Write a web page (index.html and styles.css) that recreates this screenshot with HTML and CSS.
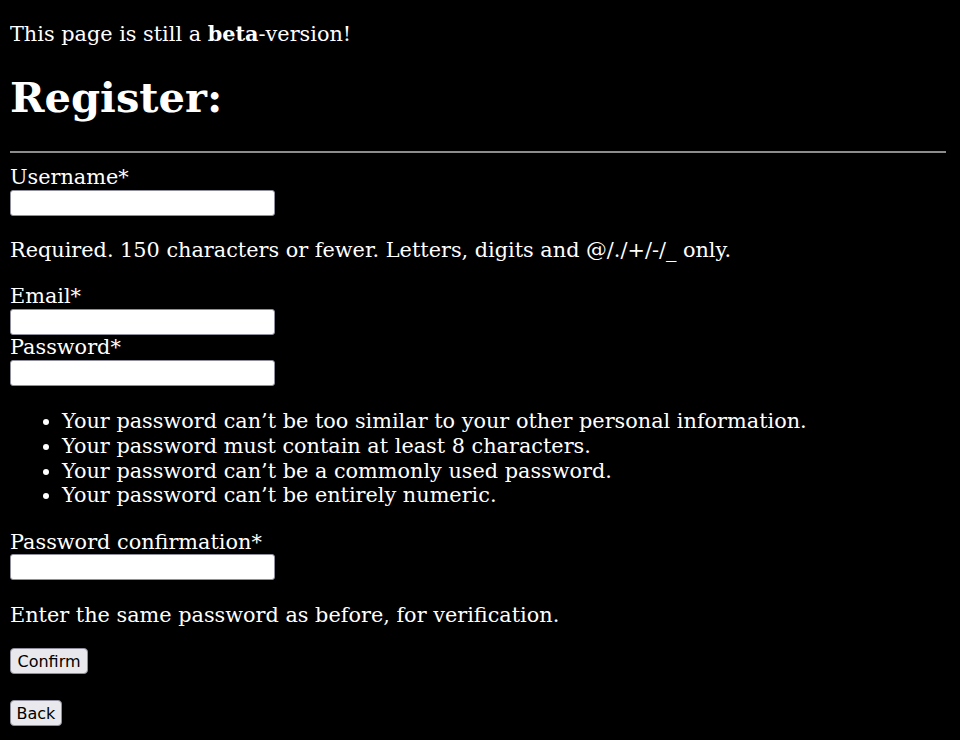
FILE: index.html
```html
<!DOCTYPE html>
<html lang="en">
<head>
<meta charset="utf-8">
<title>Register</title>
<link rel="stylesheet" href="styles.css">
</head>
<body>
<p class="beta">This page is still a <b>beta</b>-version!</p>
<h1 class="title">Register:</h1>
<hr class="rule">
<form class="form">
  <label class="label" for="u">Username*</label>
  <input class="field" id="u" type="text">
  <p class="help">Required. 150 characters or fewer. Letters, digits and @/./+/-/_ only.</p>
  <label class="label" for="e">Email*</label>
  <input class="field" id="e" type="email">
  <label class="label" for="p1">Password*</label>
  <input class="field" id="p1" type="password">
  <ul class="rules">
    <li>Your password can’t be too similar to your other personal information.</li>
    <li>Your password must contain at least 8 characters.</li>
    <li>Your password can’t be a commonly used password.</li>
    <li>Your password can’t be entirely numeric.</li>
  </ul>
  <label class="label" for="p2">Password confirmation*</label>
  <input class="field" id="p2" type="password">
  <p class="help help-last">Enter the same password as before, for verification.</p>
  <button class="btn" type="submit">Confirm</button>
</form>
<div class="back">
  <button class="btn btn-back" type="button">Back</button>
</div>
</body>
</html>
```
FILE: styles.css
```css
html, body {
  background: #000;
}
body {
  margin: 10px;
  color: #fff;
  font-family: "DejaVu Serif", serif;
  font-size: 20.8px;
  line-height: 24.75px;
}
.beta {
  margin: 11.6px 0 0;
}
.title {
  font-size: 41.6px;
  line-height: 49.4px;
  margin: 26.8px 0 0;
  font-weight: bold;
}
.rule {
  margin: 28.5px 4px 12px 0;
  border: none;
  border-top: 1px solid #8c8c8c;
  border-bottom: 1px solid #8c8c8c;
  height: 0;
}
.form {
  display: block;
}
.label {
  display: block;
}
.field {
  display: block;
  box-sizing: border-box;
  width: 265px;
  height: 26px;
  margin: 0;
  background: #fff;
  border: 1px solid #8f8f9d;
  border-radius: 3px;
}
.help {
  margin: 22.4px 0 21.3px;
}
.help-last {
  margin-bottom: 20.6px;
}
.rules {
  margin: 23.3px 0 21.5px;
  padding-left: 52px;
}
.btn {
  display: block;
  box-sizing: border-box;
  height: 26px;
  padding: 0 6.5px;
  margin: 0;
  font-family: "DejaVu Sans", sans-serif;
  font-size: 16px;
  color: #000;
  background: #e9e9ed;
  border: 1px solid #8f8f9d;
  border-radius: 4px;
}
.btn-back {
  padding: 0 5.5px;
}
.back {
  margin-top: 26.4px;
}
```
